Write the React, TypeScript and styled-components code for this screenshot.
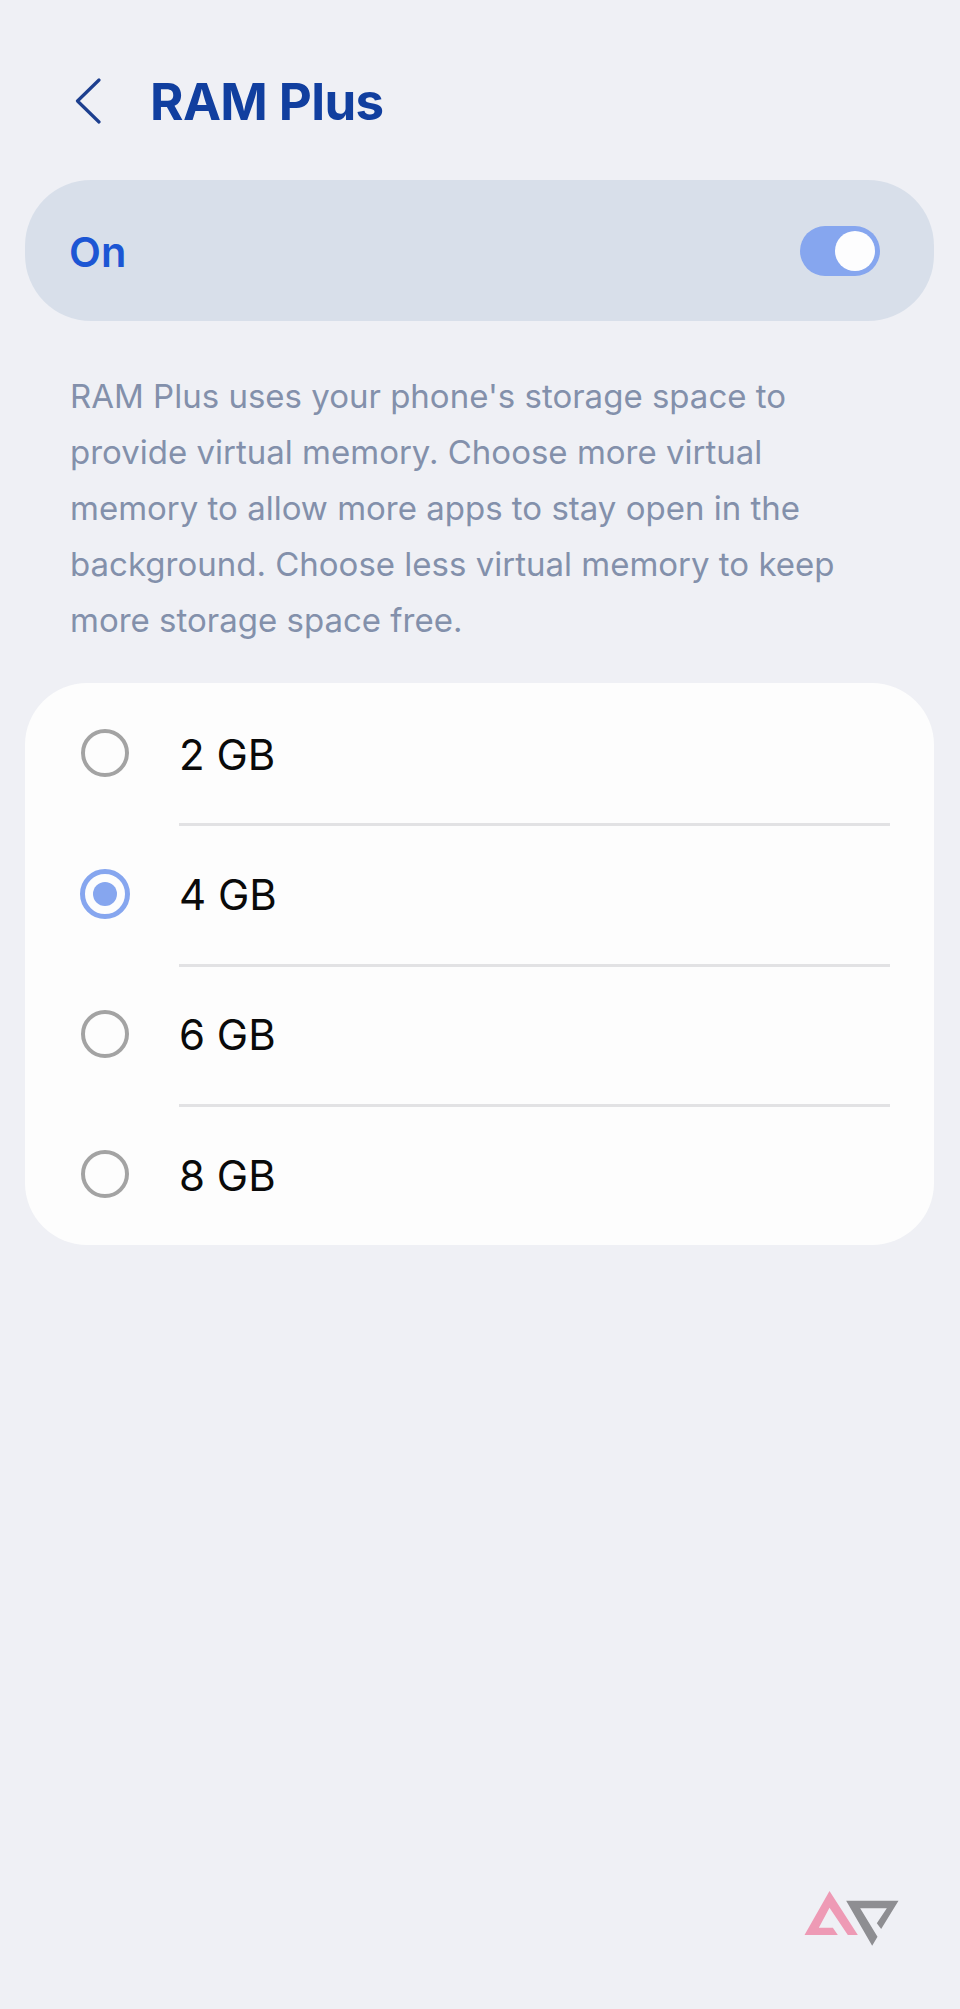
import React from "react";
import styled, { createGlobalStyle } from "styled-components";

const Global = createGlobalStyle`
  html, body { margin: 0; padding: 0; background: #eff0f5; }
  body { font-family: Inter, "Noto Sans", "Liberation Sans", sans-serif; }
`;

const Page = styled.main`
  width: 960px;
  height: 2009px;
  box-sizing: border-box;
  padding: 70px 26px 0 25px;
  display: flex;
  flex-direction: column;
  overflow: hidden;
  background: #eff0f5;
`;

const Header = styled.header`
  height: 62px;
  display: flex;
  align-items: center;
  gap: 49px;
  padding-left: 50px;
  margin-bottom: 48px;
`;

const Title = styled.h1`
  margin: 2px 0 0;
  font-size: 51px;
  line-height: 62px;
  font-weight: 700;
  letter-spacing: -0.6px;
  color: #113f9f;
`;

const SwitchBar = styled.section`
  height: 141px;
  border-radius: 66px;
  background: #d8dfea;
  display: flex;
  align-items: center;
  justify-content: space-between;
  padding: 0 54px 0 44px;
`;

const SwitchLabel = styled.span`
  font-size: 41.5px;
  font-weight: 600;
  color: #1c56d4;
  padding-top: 2px;
`;

const Toggle = styled.span`
  width: 80px;
  height: 50px;
  border-radius: 25px;
  background: #86a6ef;
  display: flex;
  align-items: center;
  justify-content: flex-end;
  padding-right: 5px;
  box-sizing: border-box;
`;

const Knob = styled.span`
  width: 40px;
  height: 40px;
  border-radius: 50%;
  background: #fdfdfe;
`;

const Description = styled.p`
  margin: 47px 0 35px;
  padding-left: 45px;
  font-size: 33px;
  line-height: 56px;
  font-weight: 400;
  color: #8390ab;
`;

const Line = styled.span`
  display: block;
  white-space: nowrap;
`;

const Card = styled.section`
  height: 562px;
  box-sizing: border-box;
  border-radius: 62px;
  background: #fdfdfd;
  display: flex;
  flex-direction: column;
  padding-top: 3px;
`;

const Row = styled.div`
  height: 140.4px;
  flex: none;
  display: flex;
  align-items: stretch;
`;

const RadioCell = styled.div`
  width: 154px;
  flex: none;
  display: flex;
  align-items: center;
  justify-content: center;
  padding: 0 0 6px 5px;
  box-sizing: border-box;
`;

const Radio = styled.span<{ $checked?: boolean }>`
  width: ${(p) => (p.$checked ? "50px" : "48px")};
  height: ${(p) => (p.$checked ? "50px" : "48px")};
  box-sizing: border-box;
  border-radius: 50%;
  border: ${(p) => (p.$checked ? "5px solid #86a6ef" : "4px solid #a3a3a3")};
  display: flex;
  align-items: center;
  justify-content: center;
`;

const RadioDot = styled.span`
  width: 24px;
  height: 24px;
  border-radius: 50%;
  background: #86a6ef;
`;

const LabelCell = styled.div<{ $divider?: boolean }>`
  flex: 1;
  margin-right: 44px;
  display: flex;
  align-items: center;
  box-sizing: border-box;
  font-size: 42px;
  font-weight: 400;
  color: #0a0a0a;
  border-bottom: 3px solid ${(p) => (p.$divider ? "#e2e2e4" : "transparent")};
  padding-bottom: 1px;
`;

const Watermark = styled.svg`
  align-self: flex-end;
  margin: 646px 34px 0 0;
  display: block;
`;

const options = [
  { label: "2 GB" },
  { label: "4 GB", checked: true },
  { label: "6 GB" },
  { label: "8 GB" },
];

const lines = [
  "RAM Plus uses your phone's storage space to",
  "provide virtual memory. Choose more virtual",
  "memory to allow more apps to stay open in the",
  "background. Choose less virtual memory to keep",
  "more storage space free.",
];

export default function App() {
  return (
    <Page>
      <Global />
      <Header>
        <svg width="26" height="46" viewBox="0 0 26 46" fill="none">
          <path d="M24 2 L2.5 23 L24 44" stroke="#1d3f8f" strokeWidth="3.2" strokeLinecap="round" strokeLinejoin="round" />
        </svg>
        <Title>RAM Plus</Title>
      </Header>
      <SwitchBar>
        <SwitchLabel>On</SwitchLabel>
        <Toggle><Knob /></Toggle>
      </SwitchBar>
      <Description>
        {lines.map((l) => <Line key={l}>{l}</Line>)}
      </Description>
      <Card>
        {options.map((o, i) => (
          <Row key={o.label}>
            <RadioCell>
              <Radio $checked={o.checked}>{o.checked && <RadioDot />}</Radio>
            </RadioCell>
            <LabelCell $divider={i < options.length - 1}>{o.label}</LabelCell>
          </Row>
        ))}
      </Card>
      <Watermark width="96" height="56" viewBox="75 68 285 168">
        <polygon points="150,68 235,200 205,200 150,118 118,178 160,178 175,200 75,200" fill="#ee9ab5" />
        <polygon points="200,97 357,97 305,182 292,165 322,120 242,120 294,205 278,232" fill="#8e8e92" />
      </Watermark>
    </Page>
  );
}
